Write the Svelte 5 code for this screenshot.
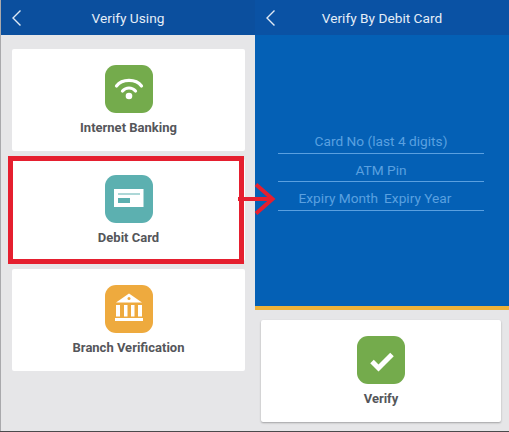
<script>
  const rows = ['Card No (last 4 digits)', 'ATM Pin'];
</script>

<div class="page">
  <section class="left">
    <header class="bar">
      <svg class="back" viewBox="0 0 12 18" width="12" height="18"><path d="M9.500 1.500 2 9l7.500 7.500" fill="none" stroke="#dfe9f5" stroke-width="1.400"/></svg>
      <span>Verify Using</span>
    </header>
    <div class="cards">
      <div class="card">
        <div class="tile green">
          <svg viewBox="0 0 48 48" width="48" height="48">
            <path d="M11.500 21C17 13.500 31 13.500 36.500 21" fill="none" stroke="#fff" stroke-width="3.200" stroke-linecap="round"/>
            <path d="M17.500 26C21 22 27 22 30.500 26" fill="none" stroke="#fff" stroke-width="3.200" stroke-linecap="round"/>
            <circle cx="24" cy="31" r="3.300" fill="#fff"/>
          </svg>
        </div>
        <div class="label">Internet Banking</div>
      </div>
      <div class="card">
        <div class="tile teal">
          <svg viewBox="0 0 48 48" width="48" height="48">
            <rect x="9" y="14" width="29.500" height="18" fill="#fff"/>
            <rect x="13" y="18.500" width="22" height="1" fill="#5cb0b0"/>
            <rect x="13" y="23" width="12" height="5" fill="#5cb0b0"/>
          </svg>
        </div>
        <div class="label">Debit Card</div>
      </div>
      <div class="card">
        <div class="tile orange">
          <svg viewBox="0 0 48 48" width="48" height="48">
            <path d="M24 8.500 37 17.500H11Z" fill="#fff"/>
            <circle cx="24" cy="13.500" r="1.500" fill="#eeaa3e"/>
            <rect x="11" y="20" width="4" height="11.500" fill="#fff"/>
            <rect x="19" y="20" width="3.500" height="11.500" fill="#fff"/>
            <rect x="26" y="20" width="3.500" height="11.500" fill="#fff"/>
            <rect x="33" y="20" width="4" height="11.500" fill="#fff"/>
            <rect x="10" y="33" width="28" height="3" fill="#fff"/>
          </svg>
        </div>
        <div class="label">Branch Verification</div>
      </div>
    </div>
  </section>

  <section class="right">
    <header class="bar">
      <svg class="back" viewBox="0 0 12 18" width="12" height="18"><path d="M9.500 1.500 2 9l7.500 7.500" fill="none" stroke="#dfe9f5" stroke-width="1.400"/></svg>
      <span>Verify By Debit Card</span>
    </header>
    <div class="form">
      {#each rows as row}
        <div class="field">{row}</div>
      {/each}
      <div class="field split"><span>Expiry Month</span><span>Expiry Year</span></div>
    </div>
    <div class="bottom">
      <div class="card verify">
        <div class="tile green">
          <svg viewBox="0 0 48 48" width="48" height="48">
            <path d="M15 25.500 21.500 32 35 18.500" fill="none" stroke="#fff" stroke-width="5"/>
          </svg>
        </div>
        <div class="label">Verify</div>
      </div>
    </div>
  </section>

  <div class="frame"></div>
  <svg class="arrow" viewBox="0 0 40 32" width="40" height="32">
    <path d="M0 16H33" stroke="#e51f2f" stroke-width="4" fill="none"/>
    <path d="M18 1.500 34.500 16 18 30.500" stroke="#e51f2f" stroke-width="4" fill="none"/>
  </svg>
</div>

<style>
  :global(body) {
    margin: 0;
    background: #e6e6e8;
  }
  .page {
    position: relative;
    display: grid;
    grid-template-columns: 255px 254px;
    width: 509px;
    height: 432px;
    overflow: hidden;
    box-sizing: border-box;
    border-bottom: 1px solid #4a4a4c;
    font-family: Roboto, "Liberation Sans", sans-serif;
    background: #e6e6e8;
  }
  .left {
    border-left: 1px solid #a9a9ac;
    display: flex;
    flex-direction: column;
    min-width: 0;
  }
  .right {
    display: flex;
    flex-direction: column;
    min-width: 0;
  }
  .bar {
    height: 35px;
    flex: none;
    box-sizing: border-box;
    display: flex;
    align-items: center;
    justify-content: center;
    position: relative;
    background: #0b4f9e;
    color: #e4edf7;
    font-size: 13.700px;
  }
  .right .bar { background: #0a52a4; }
  .back {
    position: absolute;
    left: 10px;
    top: 8.500px;
  }
  .cards {
    display: flex;
    flex-direction: column;
    gap: 8px;
    padding: 14px 10px 0 11px;
  }
  .card {
    height: 102px;
    background: #fff;
    border-radius: 2px;
    display: flex;
    flex-direction: column;
    align-items: center;
    padding-top: 16px;
    box-sizing: border-box;
  }
  .tile {
    width: 48px;
    height: 48px;
    border-radius: 11px;
    flex: none;
  }
  .tile svg { display: block; }
  .green { background: #74ab4c; }
  .teal { background: #5cb0b0; }
  .orange { background: #eeaa3e; }
  .label {
    margin-top: 7px;
    font-size: 13px;
    line-height: 16px;
    font-weight: 700;
    color: #55565a;
  }
  .form {
    height: 275px;
    flex: none;
    box-sizing: border-box;
    background: #0460b5;
    border-bottom: 4px solid #eeb23a;
    padding: 90px 25px 0 23px;
    display: flex;
    flex-direction: column;
  }
  .field {
    height: 28.500px;
    flex: none;
    box-sizing: border-box;
    border-bottom: 1px solid #5aa0e0;
    color: #5aa0e0;
    font-size: 13.700px;
    padding-top: 4px;
    line-height: 24px;
    text-align: center;
  }
  .split {
    display: flex;
    justify-content: center;
    gap: 6px;
    padding-right: 12px;
  }
  .bottom {
    padding: 10px 8px 0 6px;
  }
  .verify {
    box-shadow: 0 1px 2px rgba(0, 0, 0, 0.3);
  }
  .frame {
    position: absolute;
    left: 8px;
    top: 156px;
    width: 236px;
    height: 108px;
    box-sizing: border-box;
    border: 5px solid #e51f2f;
  }
  .arrow {
    position: absolute;
    left: 238px;
    top: 183px;
  }
</style>
